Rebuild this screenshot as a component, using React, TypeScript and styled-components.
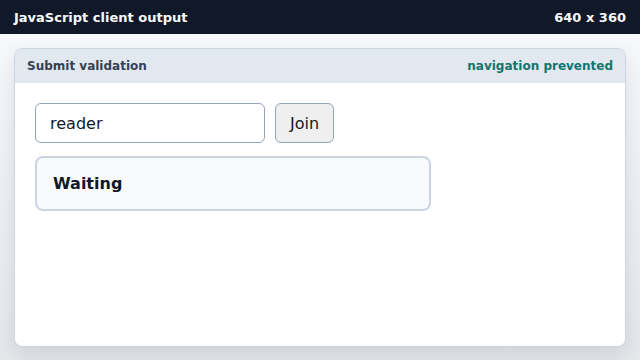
import styled, { createGlobalStyle } from "styled-components";

const GlobalStyle = createGlobalStyle`
  html, body {
    margin: 0;
    padding: 0;
  }
  body {
    font-family: "DejaVu Sans", "Liberation Sans", sans-serif;
    width: 640px;
    height: 360px;
    overflow: hidden;
  }
`;

const Page = styled.div`
  display: flex;
  flex-direction: column;
  width: 640px;
  height: 360px;
  background: linear-gradient(180deg, #f8fafc 0%, #e5e7eb 100%);
`;

const TopBar = styled.header`
  display: flex;
  align-items: center;
  justify-content: space-between;
  height: 34px;
  padding: 0 14px;
  background: #111827;
  color: #f8fafc;
  font-size: 13px;
  font-weight: bold;
  flex-shrink: 0;
`;

const Stage = styled.main`
  flex: 1;
  display: flex;
  padding: 14px 14px 13px;
`;

const Panel = styled.section`
  flex: 1;
  display: flex;
  flex-direction: column;
  background: #ffffff;
  border: 1px solid #cbd5e1;
  border-radius: 8px;
  box-shadow: 0 8px 20px rgba(15, 23, 42, 0.1);
  overflow: hidden;
`;

const PanelHead = styled.div`
  display: flex;
  align-items: center;
  justify-content: space-between;
  height: 34px;
  padding: 0 12px;
  background: #e2e8f0;
  font-size: 12px;
  font-weight: bold;
  color: #334155;
`;

const Note = styled.span<{ $tone: string }>`
  color: ${(p) => p.$tone};
`;

const PanelBody = styled.div`
  display: flex;
  flex-direction: column;
  align-items: flex-start;
  gap: 13px;
  padding: 20px 20px;
`;

const Form = styled.form`
  display: flex;
  gap: 10px;
`;

const TextInput = styled.input`
  box-sizing: border-box;
  width: 230px;
  height: 40px;
  padding: 0 14px;
  border: 1px solid #94a3b8;
  border-radius: 6px;
  font-family: "DejaVu Sans", sans-serif;
  font-size: 16px;
  color: #111827;
  background: #fff;
  outline: none;
`;

const Button = styled.button`
  box-sizing: border-box;
  height: 40px;
  padding: 0 14px;
  border: 1px solid #94a3b8;
  border-radius: 6px;
  background: #efefef;
  font-family: "DejaVu Sans", sans-serif;
  font-size: 16px;
  color: #111827;
`;

const Status = styled.div`
  box-sizing: border-box;
  width: 396px;
  height: 55px;
  display: flex;
  align-items: center;
  padding: 0 16px;
  border: 2px solid #cbd5e1;
  border-radius: 8px;
  background: #f8fafc;
  font-size: 16px;
  font-weight: bold;
  color: #111827;
`;

export default function App() {
  return (
    <>
      <GlobalStyle />
      <Page>
        <TopBar>
          <span>JavaScript client output</span>
          <span>640 x 360</span>
        </TopBar>
        <Stage>
          <Panel>
            <PanelHead>
              <span>Submit validation</span>
              <Note $tone="#0f766e">navigation prevented</Note>
            </PanelHead>
            <PanelBody>
              <Form onSubmit={(e) => e.preventDefault()}>
                <TextInput defaultValue="reader" />
                <Button type="submit">Join</Button>
              </Form>
              <Status>Waiting</Status>
            </PanelBody>
          </Panel>
        </Stage>
      </Page>
    </>
  );
}
